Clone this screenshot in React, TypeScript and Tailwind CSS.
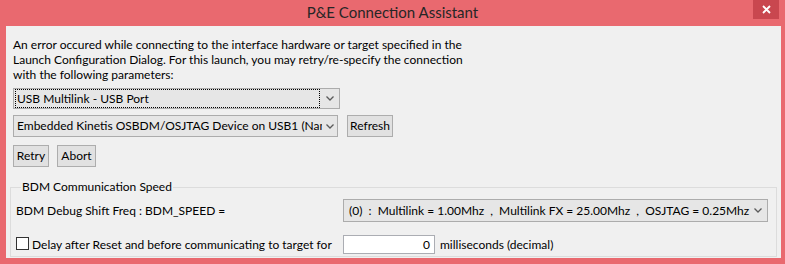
import React from "react";

const font = { fontFamily: "Lato, 'Noto Sans', sans-serif" };

function Chevron() {
  return (
    <svg width="8" height="5" viewBox="0 0 8 5" className="shrink-0">
      <path d="M0.5 0.5 L4 4 L7.5 0.5" fill="none" stroke="#5a5a5a" strokeWidth="1.3" />
    </svg>
  );
}

function Select({ text, focused, className, chevW }: { text: string; focused?: boolean; className: string; chevW: string }) {
  return (
    <div className={`flex items-center border border-[#acacac] bg-[#e6e6e6] ${className}`}>
      <div className={`flex-1 min-w-0 h-full flex items-center overflow-hidden whitespace-nowrap ${focused ? "m-[1px] border border-dotted border-black pl-[1px]" : "pl-[3px]"}`}>
        {text}
      </div>
      <div className={`${chevW} flex justify-center`}>
        <Chevron />
      </div>
    </div>
  );
}

function Button({ label, className }: { label: string; className: string }) {
  return (
    <div className={`flex items-center justify-center border border-[#adadad] bg-[#e1e1e1] ${className}`}>{label}</div>
  );
}

export default function App() {
  return (
    <div className="w-[785px] h-[264px] bg-[#e9696f] flex flex-col text-[12px] text-black" style={font}>
      <div className="h-[26px] shrink-0 flex relative">
        <div className="flex-1 flex justify-center pt-[1px] text-[15px] text-[#262626]">P&amp;E Connection Assistant</div>
        <div className="absolute left-[753px] top-0 w-[26px] h-[19px] bg-[#c9474f] flex items-center justify-center">
          <svg width="9" height="9" viewBox="0 0 9 9">
            <path d="M1 1 L8 8 M8 1 L1 8" stroke="white" strokeWidth="1.8" />
          </svg>
        </div>
      </div>
      <div className="ml-[6px] mr-[4px] mb-[6px] flex-1 bg-[#f0f0f0] flex flex-col pl-[7px] pt-[11px]">
        <p className="leading-[15px] w-[470px]">
          An error occured while connecting to the interface hardware or target specified in the Launch Configuration Dialog. For this launch, you may retry/re-specify the connection with the following parameters:
        </p>
        <Select text="USB Multilink - USB Port" focused chevW="w-[18px]" className="mt-[6px] w-[327px] h-[21px]" />
        <div className="mt-[6px] flex gap-[9px]">
          <Select text="Embedded Kinetis OSBDM/OSJTAG Device on USB1 (Name)" chevW="w-[15px]" className="w-[325px] h-[22px]" />
          <Button label="Refresh" className="w-[46px] h-[22px]" />
        </div>
        <div className="mt-[8px] flex gap-[8px]">
          <Button label="Retry" className="w-[36px] h-[22px]" />
          <Button label="Abort" className="w-[39px] h-[22px]" />
        </div>
        <fieldset className="mt-[12px] ml-[-3px] mr-[4px] border border-[#dcdcdc] pl-[5px] pr-[7px] pb-[2px]">
          <legend className="ml-[5px] px-[1px] leading-[16px]">BDM Communication Speed</legend>
          <div className="mt-[4px] flex items-center">
            <div className="w-[327px]">BDM Debug Shift Freq : BDM_SPEED =</div>
            <div className="w-[425px] h-[23px] flex items-center border border-[#acacac] bg-[#e6e6e6]">
              <div className="flex-1 pl-[5px] whitespace-pre">(0)  :  Multilink = 1.00Mhz  ,  Multilink FX = 25.00Mhz  ,  OSJTAG = 0.25Mhz</div>
              <div className="w-[22px] flex justify-center"><Chevron /></div>
            </div>
          </div>
          <div className="mt-[13px] flex items-center">
            <div className="w-[327px] flex items-center">
              <div className="w-[13px] h-[13px] border border-[#333] bg-white mr-[3px] mb-[2px]" />
              <span>Delay after Reset and before communicating to target for</span>
            </div>
            <div className="w-[92px] h-[19px] border border-[#abadb3] bg-white flex items-center justify-end pr-[4px]">0</div>
            <span className="ml-[5px]">milliseconds (decimal)</span>
          </div>
        </fieldset>
      </div>
    </div>
  );
}
